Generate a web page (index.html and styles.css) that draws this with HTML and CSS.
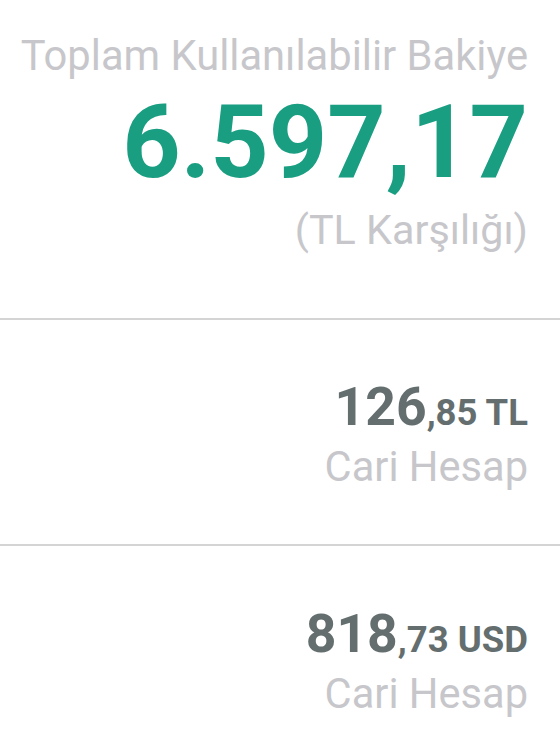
FILE: index.html
```html
<!DOCTYPE html>
<html lang="tr">
<head>
    <meta charset="UTF-8">
    <meta name="viewport" content="width=device-width, initial-scale=1.0">
    <title>Bakiye</title>
    <link rel="stylesheet" href="styles.css">
</head>
<body>
    <div class="summary">
        <div class="summary-label">Toplam Kullanılabilir Bakiye</div>
        <div class="summary-amount">6.597,17</div>
        <div class="summary-note">(TL Karşılığı)</div>
    </div>
    <div class="account">
        <div class="account-amount">126<span class="frac">,85 TL</span></div>
        <div class="account-type">Cari Hesap</div>
    </div>
    <div class="account account-last">
        <div class="account-amount">818<span class="frac">,73 USD</span></div>
        <div class="account-type">Cari Hesap</div>
    </div>
</body>
</html>
```

FILE: styles.css
```css
body {
    margin: 0;
    font-family: Roboto, "Noto Sans", sans-serif;
    background-color: #fff;
}
.summary {
    text-align: right;
    padding: 32px 32px 0 0;
    height: 320px;
    box-sizing: border-box;
    border-bottom: 2px solid #d4d4d4;
    white-space: nowrap;
}
.summary-label {
    font-size: 41.7px;
    line-height: 48px;
    color: #c7c7cb;
}
.summary-amount {
    font-size: 102px;
    line-height: 124px;
    font-weight: bold;
    color: #1a9e82;
}
.summary-note {
    font-size: 41.3px;
    line-height: 52px;
    color: #c7c7cb;
}
.account {
    text-align: right;
    padding: 57px 32px 0 0;
    height: 226px;
    box-sizing: border-box;
    border-bottom: 2px solid #d4d4d4;
    white-space: nowrap;
}
.account-last {
    padding-top: 58px;
}
.account-amount {
    font-size: 53.5px;
    line-height: 60px;
    font-weight: bold;
    color: #646e6e;
}
.account-amount .frac {
    font-size: 36.5px;
    line-height: 1;
}
.account-type {
    font-size: 41.6px;
    line-height: 60px;
    color: #c7c7cb;
}
```
